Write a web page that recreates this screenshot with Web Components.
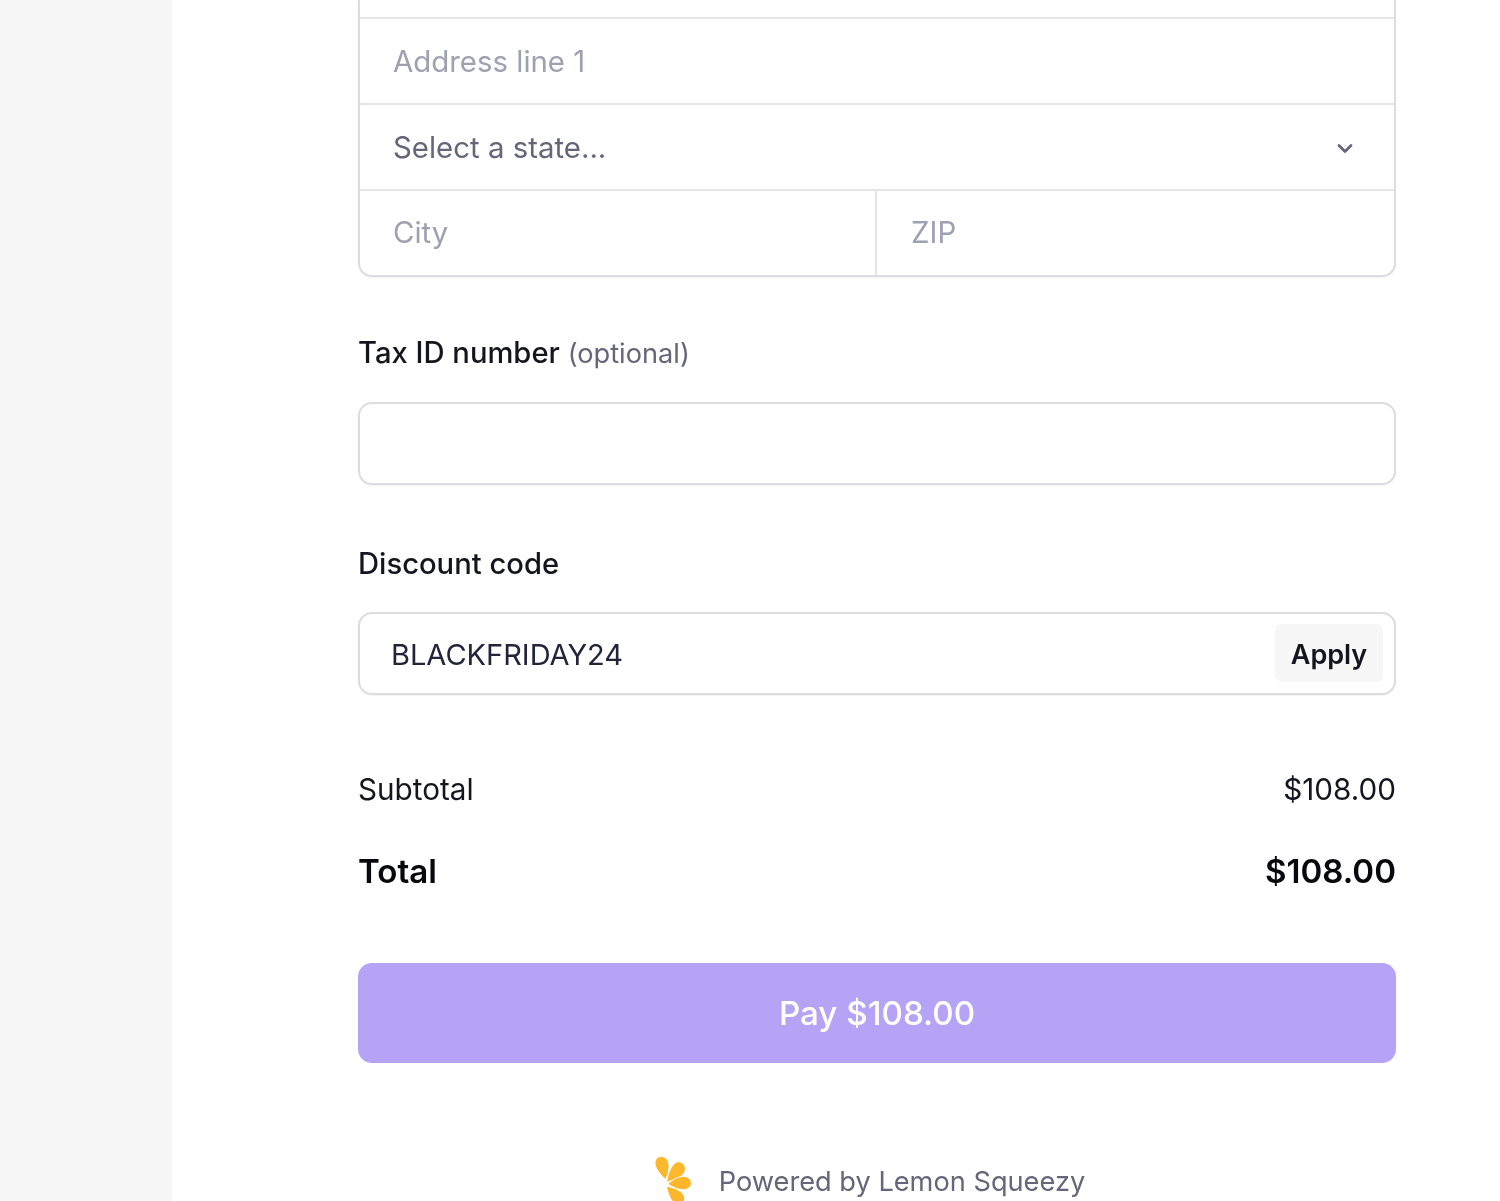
<!DOCTYPE html>
<html lang="en">
<head>
<meta charset="utf-8">
<title>Checkout</title>
<style>
  html, body { margin: 0; height: 1201px; overflow: hidden; background: #fff; }
</style>
</head>
<body>
<checkout-page>
  <address-group></address-group>
  <form-label style="margin-top:58px">Tax ID number <span slot="hint">(optional)</span></form-label>
  <text-box></text-box>
  <form-label style="margin-top:61px;margin-bottom:30px">Discount code</form-label>
  <discount-box code="BLACKFRIDAY24"></discount-box>
  <order-summary subtotal="$108.00" total="$108.00"></order-summary>
  <pay-button>Pay $108.00</pay-button>
  <powered-by>Powered by Lemon Squeezy</powered-by>
</checkout-page>

<script>
class CheckoutPage extends HTMLElement {
  connectedCallback() {
    this.attachShadow({ mode: 'open' });
    this.shadowRoot.innerHTML = `
      <style>
        :host {
          display: grid;
          grid-template-columns: 172px 1fr;
          height: 1201px;
          overflow: hidden;
          font-family: Inter, "Liberation Sans", sans-serif;
          color: #1f2130;
          filter: blur(.7px);
        }
        .side { background: #f7f7f8; }
        .main { padding-left: 186px; }
        .col { width: 1038px; display: flex; flex-direction: column; }
      </style>
      <div class="side"></div>
      <div class="main"><div class="col"><slot></slot></div></div>
    `;
  }
}

class AddressGroup extends HTMLElement {
  connectedCallback() {
    this.attachShadow({ mode: 'open' });
    this.shadowRoot.innerHTML = `
      <style>
        :host {
          display: block;
          box-sizing: border-box;
          border: 2px solid #dcdce3;
          border-top: 0;
          border-radius: 0 0 14px 14px;
          box-shadow: 0 1px 2px rgba(0,0,0,.06);
          font-size: 29.4px;
        }
        .row { height: 86px; box-sizing: border-box; border-top: 2px solid #e4e4ea; display: flex; align-items: center; }
        .stub { height: 17px; }
        .cell { padding-left: 33px; color: #9ea1b0; flex: 1; }
        .select { color: #646679; justify-content: space-between; padding-right: 39px; }
        .select .cell { color: inherit; }
        .half { flex: 0 0 517px; box-sizing: border-box; align-self: stretch; display: flex; align-items: center; border-right: 2px solid #e4e4ea; padding-bottom: 2px; }
        .half + .cell { padding-left: 34px; padding-bottom: 2px; }
        svg { display: block; margin-top: 2px; }
      </style>
      <div class="stub"></div>
      <div class="row"><div class="cell">Address line 1</div></div>
      <div class="row select">
        <div class="cell">Select a state...</div>
        <svg width="20" height="20" viewBox="0 0 20 20" fill="none" stroke="#646679" stroke-width="2.8" stroke-linecap="round" stroke-linejoin="round"><path d="M4 7.5l6 6 6-6"/></svg>
      </div>
      <div class="row"><div class="cell half">City</div><div class="cell">ZIP</div></div>
    `;
  }
}

class FormLabel extends HTMLElement {
  connectedCallback() {
    this.attachShadow({ mode: 'open' });
    this.shadowRoot.innerHTML = `
      <style>
        :host { display: block; height: 36px; line-height: 36px; font-size: 29.2px; font-weight: 500; color: #14151f; margin-bottom: 31px; white-space: nowrap; }
        ::slotted([slot="hint"]) { font-size: 27.2px; font-weight: 400; color: #646679; }
      </style>
      <slot></slot><slot name="hint"></slot>
    `;
  }
}

class TextBox extends HTMLElement {
  connectedCallback() {
    this.attachShadow({ mode: 'open' });
    this.shadowRoot.innerHTML = `
      <style>
        :host { display: block; box-sizing: border-box; height: 83px; border: 2px solid #dcdce3; border-radius: 14px; box-shadow: 0 1px 2px rgba(0,0,0,.06); }
      </style>
    `;
  }
}

class DiscountBox extends HTMLElement {
  connectedCallback() {
    this.attachShadow({ mode: 'open' });
    this.shadowRoot.innerHTML = `
      <style>
        :host {
          display: flex; align-items: center; justify-content: space-between;
          box-sizing: border-box; height: 83px;
          border: 2px solid #dcdce3; border-radius: 14px;
          box-shadow: 0 1px 2px rgba(0,0,0,.06);
          padding: 0 11px 2px 31px;
          font-size: 29px; color: #22243a;
        }
        span { margin-top: 4px; }
        button {
          all: unset; width: 108px; height: 58px; text-align: center; line-height: 62px;
          background: #f7f7f8; border-radius: 7px;
          font-size: 27px; font-weight: 600; color: #14151f;
        }
      </style>
      <span>${this.getAttribute('code')}</span>
      <button>Apply</button>
    `;
  }
}

class OrderSummary extends HTMLElement {
  connectedCallback() {
    this.attachShadow({ mode: 'open' });
    this.shadowRoot.innerHTML = `
      <style>
        :host { display: flex; flex-direction: column; margin-top: 74px; color: #14151f; }
        .row { display: flex; justify-content: space-between; align-items: center; }
        .sub { height: 38px; box-sizing: border-box; padding-top: 2px; font-size: 29.7px; }
        .tot { height: 44px; margin-top: 42px; font-size: 33.1px; font-weight: 600; color: #08080f; }
      </style>
      <div class="row sub"><span>Subtotal</span><span>${this.getAttribute('subtotal')}</span></div>
      <div class="row tot"><span>Total</span><span>${this.getAttribute('total')}</span></div>
    `;
  }
}

class PayButton extends HTMLElement {
  connectedCallback() {
    this.attachShadow({ mode: 'open' });
    this.shadowRoot.innerHTML = `
      <style>
        :host {
          display: flex; align-items: center; justify-content: center;
          height: 100px; margin-top: 70px;
          background: #b7a3f5; border-radius: 14px;
          color: #fff; font-size: 33.2px; font-weight: 500;
        }
      </style>
      <slot></slot>
    `;
  }
}

class PoweredBy extends HTMLElement {
  connectedCallback() {
    this.attachShadow({ mode: 'open' });
    this.shadowRoot.innerHTML = `
      <style>
        :host {
          display: flex; align-items: center; justify-content: center; gap: 26px;
          margin-top: 93px; padding-right: 16px; height: 50px;
          font-size: 27.2px; color: #646679; white-space: nowrap;
        }
        svg { display: block; flex: none; margin-top: -2px; }
      </style>
      <svg width="40" height="50" viewBox="40 45 120 150" fill="#fdb72a" stroke="#fff" stroke-width="3" stroke-linejoin="round">
        <path d="M78 118C64 106 47 88 46 70 45 55 58 47 70 50 83 53 89 68 88 83 87 96 83 108 78 118Z"/>
        <path d="M81 126C83 108 91 82 106 69 118 60 135 69 137 83 139 97 128 108 114 115 103 120 92 124 81 126Z"/>
        <path d="M84 132C98 120 114 109 131 109 146 109 156 119 155 131 154 144 139 151 124 149 109 147 95 139 84 132Z"/>
        <path d="M80 139C95 141 114 146 127 158 138 169 138 186 126 193 113 199 99 188 92 174 86 163 83 151 80 139Z"/>
      </svg>
      <slot></slot>
    `;
  }
}

customElements.define('checkout-page', CheckoutPage);
customElements.define('address-group', AddressGroup);
customElements.define('form-label', FormLabel);
customElements.define('text-box', TextBox);
customElements.define('discount-box', DiscountBox);
customElements.define('order-summary', OrderSummary);
customElements.define('pay-button', PayButton);
customElements.define('powered-by', PoweredBy);
</script>
</body>
</html>
